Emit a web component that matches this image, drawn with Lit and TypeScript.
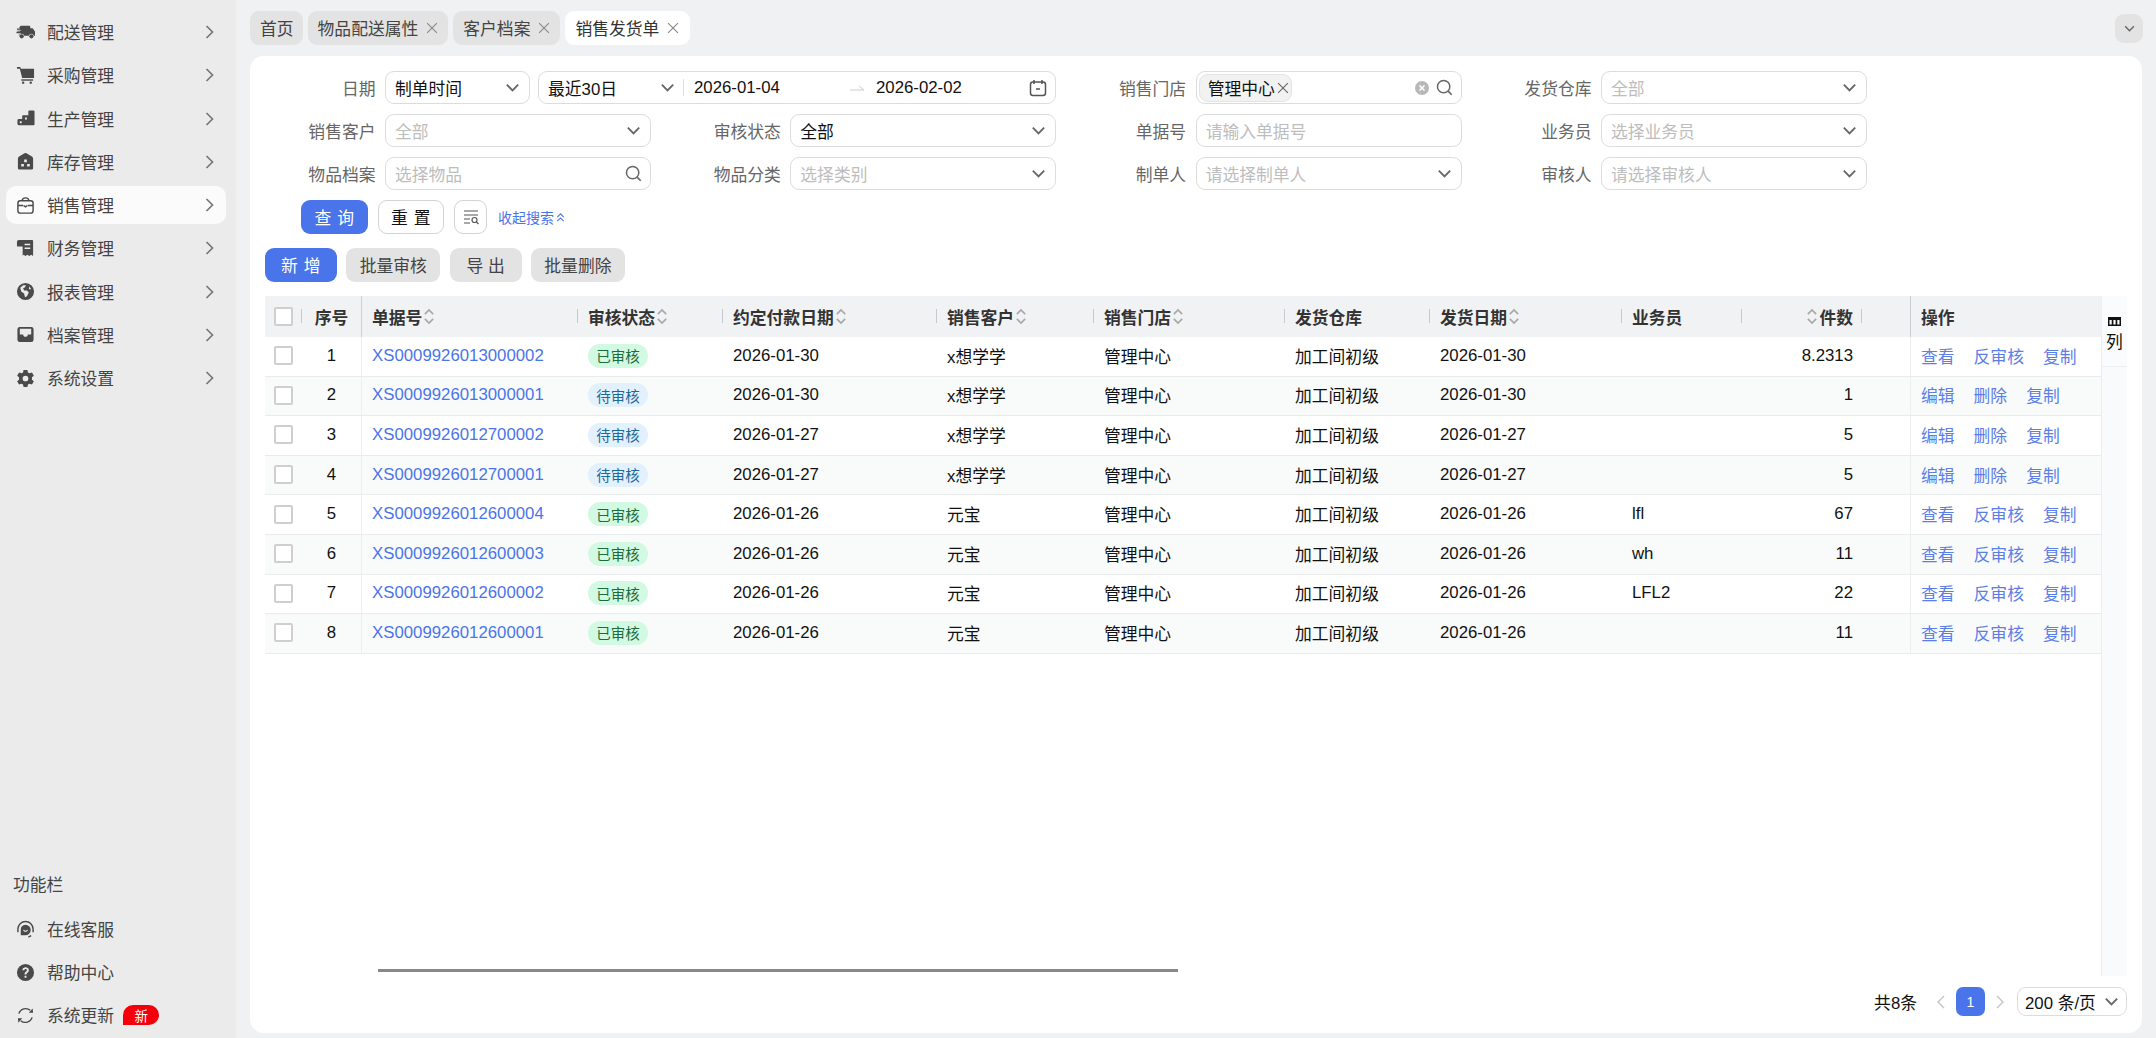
import { LitElement, html, css, svg } from "lit";
import { customElement } from "lit/decorators.js";

const chev = html`<svg class="chev" viewBox="0 0 12 12"><path d="M2 4l4 4 4-4" fill="none" stroke="currentColor" stroke-width="1.300"/></svg>`;
const search = html`<svg class="sico" viewBox="0 0 16 16"><circle cx="7.200" cy="7.200" r="5.800" fill="none" stroke="#666" stroke-width="1.400"/><path d="M11.400 11.400l3.400 3.400" stroke="#666" stroke-width="1.500"/></svg>`;
const x = html`<svg class="x" viewBox="0 0 10 10"><path d="M1.500 1.500l7 7M8.500 1.500l-7 7" stroke="currentColor" stroke-width=".8"/></svg>`;
const sorter = html`<svg class="sort" viewBox="0 0 10 16"><path d="M1.500 6l3.500-3.500L8.500 6M1.500 10l3.500 3.500L8.500 10" fill="none" stroke="#a8a8a8" stroke-width="1.400"/></svg>`;

const icons: Record<string, unknown> = {
  truck: svg`<path d="M5 3h9a1 1 0 0 1 1 1v1.500h2.500L20 9v4.500h-1.200a2.700 2.700 0 0 0-5.300 0H8.700a2.700 2.700 0 0 0-5.300 0H3V12H4V9H1.500V7.500H4V5H3z"/><path d="M0 7.500h5M.5 11h4.500" stroke="#ebebeb" stroke-width="1"/><path d="M1 6.500h5.500M.5 10h5.500" stroke="#4a4a4a" stroke-width="1.400"/><circle cx="6" cy="14" r="2.200"/><circle cx="16.200" cy="14" r="2.200"/>`,
  cart: svg`<path d="M1 1h3.500l.6 2H19v9.500H6.500L4 3H1z"/><rect x="5.500" y="14" width="12.500" height="1.500"/><circle cx="7.500" cy="17.500" r="1.300"/><circle cx="15.500" cy="17.500" r="1.300"/>`,
  steps: svg`<path d="M13 2.500a1 1 0 0 1 1-1h4.500a1 1 0 0 1 1 1V16a1 1 0 0 1-1 1H3a1.500 1.500 0 0 1-1.500-1.500V12a1.500 1.500 0 0 1 1.500-1.500h3.500V7.500a1 1 0 0 1 1-1H13zM4 13v2h2v-2zM9.500 9v2h2V9z" fill-rule="evenodd"/>`,
  store: svg`<path d="M9 1.300a2 2 0 0 1 2 0l5.800 3.500A2.500 2.500 0 0 1 18 7v10a1.500 1.500 0 0 1-1.500 1.500h-13A1.500 1.500 0 0 1 2 17V7a2.500 2.500 0 0 1 1.200-2.200zM8.600 8v2.800h2.800V8zM5.500 12.500v2.800h2.800v-2.800zM11.700 12.500v2.800h2.800v-2.800z" fill-rule="evenodd"/>`,
  bag: svg`<g fill="none" stroke="currentColor" stroke-width="1.500"><rect x="2" y="5" width="16" height="13" rx="2.500"/><path d="M6.500 5c0-4 7-4 7 0M2 10h5.500M12.500 10H18M8 10l2 1.500 2-1.500"/></g>`,
  bill: svg`<path d="M3 1h14a1 1 0 0 1 1 1v16l-2-1.500-2 1.500-2-1.500-2 1.500-2-1.500-1 1V8H2a1 1 0 0 1-1-1V3a2 2 0 0 1 2-2zM9 5v1.500h6V5zM9 9v1.500h6V9z" fill-rule="evenodd"/>`,
  globe: svg`<path d="M10 1a9 9 0 1 0 0 18 9 9 0 0 0 0-18zM4.500 6l3-2.500h3l-1 2-2 1 1 2.500h3l2 2-2 4-2 1-1-4-3-2zM14 4.500l2 3h-2.500z" fill-rule="evenodd"/>`,
  inbox: svg`<path d="M4 2h12a2.500 2.500 0 0 1 2.500 2.500v11A2.500 2.500 0 0 1 16 18H4a2.500 2.500 0 0 1-2.500-2.500v-11A2.500 2.500 0 0 1 4 2zM4 4v6h3.500c0 3.200 5 3.200 5 0H16V4z" fill-rule="evenodd"/>`,
  gear: svg`<path d="M8 1h4l.6 2.600 1.700.9 2.500-.9 2 3.400-2 1.800v2.400l2 1.800-2 3.400-2.500-.9-1.700.9L12 19H8l-.6-2.600-1.700-.9-2.500.9-2-3.400 2-1.800V8.800l-2-1.800 2-3.400 2.500.9 1.700-.9zM10 7a3 3 0 1 0 0 6 3 3 0 0 0 0-6z" fill-rule="evenodd"/>`,
  service: svg`<path d="M10 5a5.500 5.500 0 0 1 5.500 5.500 5.500 5.500 0 0 1-5.500 5.500H5v-5.500A5.500 5.500 0 0 1 10 5zM7.500 10.500c.5 2.500 4.500 2.500 5 0l-1-.2c-.5 1.300-2.500 1.300-3 0z" fill-rule="evenodd"/><path d="M2 13V9.500a8 8 0 0 1 16 0V13M16 16.500l-3 1.500" fill="none" stroke="currentColor" stroke-width="1.500"/>`,
  help: svg`<path d="M10 1a9 9 0 1 0 0 18 9 9 0 0 0 0-18zM6.700 7.500C7 3.500 13.500 3.600 13.500 7.500c0 2.500-2.500 2.500-2.500 4.500H9c0-3 2.500-3 2.500-4.500 0-1.600-2.500-1.700-2.800 0zM9 13.500h2v2H9z" fill-rule="evenodd"/>`,
  refresh: svg`<g fill="none" stroke="currentColor" stroke-width="1.400"><path d="M3 8a7.500 7.500 0 0 1 12-3.500M17 12a7.500 7.500 0 0 1-12 3.500"/></g><path d="M13.500 7H18l-.5-4.500zM6.500 13H2l.5 4.500z"/>`,
};

const menu: [string, string][] = [
  ["truck", "配送管理"], ["cart", "采购管理"], ["steps", "生产管理"], ["store", "库存管理"],
  ["bag", "销售管理"], ["bill", "财务管理"], ["globe", "报表管理"], ["inbox", "档案管理"], ["gear", "系统设置"],
];

const rows = [
  ["XS0009926013000002", "已审核", "2026-01-30", "x想学学", "2026-01-30", "", "8.2313"],
  ["XS0009926013000001", "待审核", "2026-01-30", "x想学学", "2026-01-30", "", "1"],
  ["XS0009926012700002", "待审核", "2026-01-27", "x想学学", "2026-01-27", "", "5"],
  ["XS0009926012700001", "待审核", "2026-01-27", "x想学学", "2026-01-27", "", "5"],
  ["XS0009926012600004", "已审核", "2026-01-26", "元宝", "2026-01-26", "lfl", "67"],
  ["XS0009926012600003", "已审核", "2026-01-26", "元宝", "2026-01-26", "wh", "11"],
  ["XS0009926012600002", "已审核", "2026-01-26", "元宝", "2026-01-26", "LFL2", "22"],
  ["XS0009926012600001", "已审核", "2026-01-26", "元宝", "2026-01-26", "", "11"],
];

@customElement("app-root")
export class AppRoot extends LitElement {
  static styles = css`
    :host { display: flex; width: 2156px; height: 1038px; overflow: hidden; background: #f0f1f2;
      font: 16.800px "Liberation Sans", "Noto Sans CJK SC", sans-serif; color: #333; }
    * { box-sizing: border-box; }
    .side { width: 236px; flex: none; background: #ebebeb; display: flex; flex-direction: column; padding: 13px 0 0 6px; color: #444; }
    .mi { height: 38px; width: 220px; margin-bottom: 5.250px; display: flex; align-items: center; padding: 0 11px 0 10px; border-radius: 10px; flex: none; }
    .mi.on { background: #fbfbfb; }
    .mi .ic { width: 19px; height: 19px; fill: #4a4a4a; color: #4a4a4a; flex: none; margin-right: 12px; }
    .mi .t { flex: 1; }
    .mi .arr { width: 10px; height: 16px; color: #777; }
    .mi.bot { margin-bottom: 5px; }
    .mi.last { margin-bottom: 4px; }
    .grow { flex: 1; }
    .fb { padding: 0 0 10px 7px; height: 42px; display: flex; align-items: center; color: #444; flex: none; }
    .badge { background: #f5000a; color: #fff; font-size: 13.500px; height: 20px; width: 36px; border-radius: 10px 10px 10px 0; display: flex; align-items: center; justify-content: center; margin-left: 9px; }

    .main { flex: 1; min-width: 0; display: flex; flex-direction: column; padding: 11px 14px 5px 14px; }
    .tabs { display: flex; gap: 5px; height: 34px; flex: none; margin-bottom: 11px; align-items: stretch; }
    .tab { background: #e3e3e3; border-radius: 9px; padding: 0 9px 0 10px; display: flex; align-items: center; gap: 7px; color: #444; }
    .tab.plain { padding-right: 9px; }
    .tab.on { background: #fff; color: #333; padding-right: 10px; }
    .x { width: 14px; height: 14px; color: #888; flex: none; }
    .tabmore { margin-left: auto; width: 28px; height: 29px; margin-top: 3px; background: #e3e3e3; border-radius: 9px; display: flex; align-items: center; justify-content: center; color: #555; margin-right: -1px; }
    .tabmore .chev { width: 13px; height: 13px; }

    .card { flex: 1; min-height: 0; background: #fff; border-radius: 14px; display: flex; flex-direction: column; padding: 15px 0 0; }
    .form { display: grid; grid-template-columns: repeat(4, 401px); column-gap: 4.330px; row-gap: 10px; }
    .f { display: flex; height: 33px; align-items: center; }
    .f.wide { grid-column: span 2; }
    .f label { width: 125.500px; margin-right: 9.500px; text-align: right; color: #666; flex: none; }
    .ctl { flex: 1; min-width: 0; height: 33px; border: 1px solid #dcdcdc; border-radius: 9px; display: flex; align-items: center; padding: 0 8px 0 9px; color: #111; }
    .ctl .v { flex: 1; }
    .ph { color: #bdbdbd; flex: 1; }
    .chev { width: 17px; height: 17px; color: #666; flex: none; }
    .sico { width: 17px; height: 17px; flex: none; }
    .sel1 { flex: none; width: 145px; margin-right: 8px; }
    .range { flex: 1; min-width: 0; }
    .range .vl { width: 1px; height: 17px; background: #ddd; margin: 0 10px 0 7px; flex: none; }
    .range .p { width: 111px; flex: none; }
    .range .d1 { width: 156px; flex: none; padding-top: 1px; }
    .range .arrow { width: 14px; height: 8px; margin-right: 12px; flex: none; }
    .range .d2 { flex: 1; padding-top: 1px; }
    .cal { width: 18px; height: 18px; flex: none; }
    .tagc { padding: 0 8px 0 2px; }
    .tag { height: 28px; background: #f2f2f2; border: 1px solid #e4e4e4; border-radius: 9px; padding: 0 1px 0 8px; display: flex; align-items: center; gap: 1px; color: #111; }
    .tag .x { color: #666; }
    .clear { width: 14px; height: 14px; margin-right: 7px; flex: none; }

    .acts { display: flex; align-items: center; height: 34px; margin: 10px 0 0 51px; flex: none; }
    button { font: inherit; height: 34px; border-radius: 9px; cursor: pointer; padding: 0; }
    .b1 { width: 67px; background: #4a74ea; border: none; color: #fff; letter-spacing: .6px; }
    .b2 { width: 66px; background: #fff; border: 1px solid #d4d4d4; color: #111; margin-left: 10px; letter-spacing: .6px; }
    .b3 { width: 33px; background: #fff; border: 1px solid #d4d4d4; margin-left: 10px; display: flex; align-items: center; justify-content: center; }
    .b3 svg { width: 18px; height: 18px; }
    .collapse { color: #4a74ea; font-size: 14px; margin-left: 11px; display: flex; align-items: center; gap: 1px; }
    .collapse svg { width: 11px; height: 11px; }

    .tools { display: flex; gap: 9.300px; margin: 14px 0 14px 15px; flex: none; }
    .tools button { background: #e3e3e3; border: none; color: #444; }
    .tools .b1 { background: #4a74ea; color: #fff; width: 72px; }
    .w94 { width: 94px; }
    .w72 { width: 72px; }

    .tw { flex: 1; min-height: 0; display: flex; margin-left: 15px; margin-right: 15px; }
    .tb { width: 1837px; flex: none; border-right: 1px solid #eee; position: relative; }
    .r { display: grid; grid-template-columns: 37px 60px 216px 145px 214px 157px 191px 145px 192px 120px 120px 48px 192px; height: 39.600px; border-bottom: 1px solid #e9ebec; align-items: stretch; color: #111; }
    .r:nth-child(odd) { background: #f9fbfa; }
    .r .c { padding-bottom: 1px; }
    .r.h { height: 41px; background: #f1f2f4; font-weight: 700; color: #333; border-bottom: none; }
    .r.h .c { padding-bottom: 0; }
    .c { display: flex; align-items: center; padding: 0 9px 0 10px; position: relative; min-width: 0; white-space: nowrap; }
    .c.ctr { justify-content: center; padding-left: 0; padding-right: 0; }
    .c.rt { justify-content: flex-end; padding-right: 9px; }
    .h .c.sep::after { content: ""; position: absolute; right: 0; top: 13px; height: 14px; width: 1px; background: #c6cad0; }
    .h .c.fix1 { border-right: 1px solid #cdd0d6; }
    .h .c.fix2 { border-left: 1px solid #c9ccd2; }
    .c.fix1 { border-right: 1px solid #eceeef; }
    .c.fix2 { border-left: 1px solid #eceeef; }
    .cb { width: 19px; height: 19px; background: #fff; border: 2px solid #cfcfcf; border-radius: 2px; flex: none; }
    .sort { width: 12px; height: 19px; margin-left: 1px; flex: none; }
    .sort.l { margin: 0 1px 0 0; }
    a { color: #4a74ea; text-decoration: none; }
    .st { height: 24px; width: 60px; border-radius: 12px; font-size: 14.500px; display: flex; align-items: center; justify-content: center; }
    .st.ok { background: #d2f9e2; color: #1b6b3c; }
    .st.wait { background: #e3f0fd; color: #1c6a96; }
    .ops { gap: 19px; }
    .ops a { color: #5b7ee8; }
    .col { width: 25px; flex: none; background: #f9fafb; display: flex; flex-direction: column; }
    .colh { height: 71px; border-bottom: 1px solid #eceeef; background: #fafbfc; display: flex; flex-direction: column; align-items: center; padding-top: 21px; color: #111; line-height: 18px; }
    .colh svg { width: 13px; height: 9px; margin-bottom: 8px; flex: none; }
    .hs { position: absolute; left: 113px; top: 673px; width: 800px; height: 3px; background: #888; }
    .foot { height: 57px; flex: none; display: flex; align-items: center; justify-content: flex-end; padding: 0 15px 6px 0; color: #111; }
    .foot .pg { width: 29px; height: 29px; background: #4a74ea; color: #fff; border-radius: 7px; display: flex; align-items: center; justify-content: center; font-size: 14px; margin: 0 10px; }
    .foot .nav { width: 10px; height: 16px; color: #c4c4c4; flex: none; }
    .foot .tot { margin-right: 19px; }
    .foot .ps { width: 110px; height: 29px; margin-left: 12px; border: 1px solid #dcdcdc; border-radius: 9px; display: flex; align-items: center; padding: 0 6px 0 7px; justify-content: space-between; }
  `;

  private side(ic: string, t: string, on = false) {
    return html`<div class="mi ${on ? "on" : ""}">
      <svg class="ic" viewBox="0 0 20 20">${icons[ic]}</svg><span class="t">${t}</span>
      <svg class="arr" viewBox="0 0 10 16"><path d="M1.500 2l6 6-6 6" fill="none" stroke="currentColor" stroke-width="1.700"/></svg>
    </div>`;
  }
  private sel(label: string, val: string, ph = false) {
    return html`<div class="f"><label>${label}</label><div class="ctl">
      ${ph ? html`<span class="ph">${val}</span>` : html`<span class="v">${val}</span>`}${chev}</div></div>`;
  }
  private head(t: string, sep = true, s = true) {
    return html`<div class="c ${sep ? "sep" : ""}">${t}${s ? sorter : ""}</div>`;
  }
  private bottom(ic: string, t: string) {
    return html`<div class="mi bot"><svg class="ic" viewBox="0 0 20 20">${icons[ic]}</svg><span>${t}</span></div>`;
  }
  render() {
    return html`
      <aside class="side">
        ${menu.map(([i, t], n) => this.side(i, t, n === 4))}
        <div class="grow"></div>
        <div class="fb">功能栏</div>
        ${this.bottom("service", "在线客服")}
        ${this.bottom("help", "帮助中心")}
        <div class="mi bot last"><svg class="ic" viewBox="0 0 20 20">${icons.refresh}</svg><span>系统更新</span><span class="badge">新</span></div>
      </aside>
      <main class="main">
        <div class="tabs">
          <div class="tab plain">首页</div>
          <div class="tab">物品配送属性${x}</div>
          <div class="tab">客户档案${x}</div>
          <div class="tab on">销售发货单${x}</div>
          <div class="tabmore">${chev}</div>
        </div>
        <section class="card">
          <div class="form">
            <div class="f wide"><label>日期</label>
              <div class="ctl sel1"><span class="v">制单时间</span>${chev}</div>
              <div class="ctl range"><span class="p">最近30日</span>${chev}<span class="vl"></span>
                <span class="d1">2026-01-04</span>
                <svg class="arrow" viewBox="0 0 14 8"><path d="M0 6h14M9 2l5 4" fill="none" stroke="#ccc" stroke-width="1"/></svg>
                <span class="d2">2026-02-02</span>
                <svg class="cal" viewBox="0 0 18 18"><rect x="1.500" y="3" width="15" height="13.500" rx="2.500" fill="none" stroke="#555" stroke-width="1.500"/><path d="M5 1v4M13 1v4M7 10h4" stroke="#555" stroke-width="1.500"/></svg>
              </div>
            </div>
            <div class="f"><label>销售门店</label><div class="ctl tagc"><span class="tag">管理中心${x}</span><span class="grow"></span>
              <svg class="clear" viewBox="0 0 14 14"><circle cx="7" cy="7" r="7" fill="#b8b8b8"/><path d="M4.500 4.500l5 5M9.500 4.500l-5 5" stroke="#fff" stroke-width="1.500"/></svg>${search}</div></div>
            ${this.sel("发货仓库", "全部", true)}
            ${this.sel("销售客户", "全部", true)}
            ${this.sel("审核状态", "全部")}
            <div class="f"><label>单据号</label><div class="ctl"><span class="ph">请输入单据号</span></div></div>
            ${this.sel("业务员", "选择业务员", true)}
            <div class="f"><label>物品档案</label><div class="ctl"><span class="ph">选择物品</span>${search}</div></div>
            ${this.sel("物品分类", "选择类别", true)}
            ${this.sel("制单人", "请选择制单人", true)}
            ${this.sel("审核人", "请选择审核人", true)}
          </div>
          <div class="acts">
            <button class="b1">查 询</button><button class="b2">重 置</button>
            <button class="b3"><svg viewBox="0 0 18 18"><path d="M2 3h14M2 7h14M2 11h6M2 15h6" stroke="#555" stroke-width="1.200"/><circle cx="12.500" cy="12" r="2.500" fill="none" stroke="#555" stroke-width="1.200"/><path d="M14.500 14l2 2" stroke="#555" stroke-width="1.200"/></svg></button>
            <span class="collapse">收起搜索<svg viewBox="0 0 12 12"><path d="M2.500 5.500L6 2l3.500 3.500M2.500 10L6 6.500 9.500 10" fill="none" stroke="#4a74ea" stroke-width="1.200"/></svg></span>
          </div>
          <div class="tools">
            <button class="b1">新 增</button><button class="w94">批量审核</button><button class="w72">导 出</button><button class="w94">批量删除</button>
          </div>
          <div class="tw">
            <div class="tb">
              <div class="r h">
                <div class="c ctr sep"><span class="cb"></span></div>
                <div class="c ctr fix1">序号</div>
                ${this.head("单据号")}${this.head("审核状态")}${this.head("约定付款日期")}${this.head("销售客户")}${this.head("销售门店")}
                ${this.head("发货仓库", true, false)}${this.head("发货日期")}${this.head("业务员", true, false)}
                <div class="c rt sep"><svg class="sort l" viewBox="0 0 10 16"><path d="M1.500 6l3.500-3.500L8.500 6M1.500 10l3.500 3.500L8.500 10" fill="none" stroke="#a8a8a8" stroke-width="1.400"/></svg>件数</div>
                <div class="c"></div>
                <div class="c fix2">操作</div>
              </div>
              ${rows.map((r, i) => html`<div class="r">
                <div class="c ctr"><span class="cb"></span></div>
                <div class="c ctr fix1">${i + 1}</div>
                <div class="c"><a>${r[0]}</a></div>
                <div class="c"><span class="st ${r[1] === "已审核" ? "ok" : "wait"}">${r[1]}</span></div>
                <div class="c">${r[2]}</div><div class="c">${r[3]}</div><div class="c">管理中心</div><div class="c">加工间初级</div>
                <div class="c">${r[4]}</div><div class="c">${r[5]}</div><div class="c rt">${r[6]}</div><div class="c"></div>
                <div class="c fix2 ops">${r[1] === "已审核"
                  ? html`<a>查看</a><a>反审核</a><a>复制</a>`
                  : html`<a>编辑</a><a>删除</a><a>复制</a>`}</div>
              </div>`)}
              <div class="hs"></div>
            </div>
            <div class="col"><div class="colh"><svg viewBox="0 0 13 9"><path d="M0 0h13v9H0zM1.500 3v4.500h2.200V3zM5.400 3v4.500h2.200V3zM9.300 3v4.500h2.200V3z" fill="#111" fill-rule="evenodd"/></svg>列</div></div>
          </div>
          <div class="foot">
            <span class="tot">共8条</span>
            <svg class="nav" viewBox="0 0 10 16"><path d="M8 2L2 8l6 6" fill="none" stroke="currentColor" stroke-width="1.400"/></svg>
            <span class="pg">1</span>
            <svg class="nav" viewBox="0 0 10 16"><path d="M2 2l6 6-6 6" fill="none" stroke="currentColor" stroke-width="1.400"/></svg>
            <span class="ps">200 条/页${chev}</span>
          </div>
        </section>
      </main>`;
  }
}
